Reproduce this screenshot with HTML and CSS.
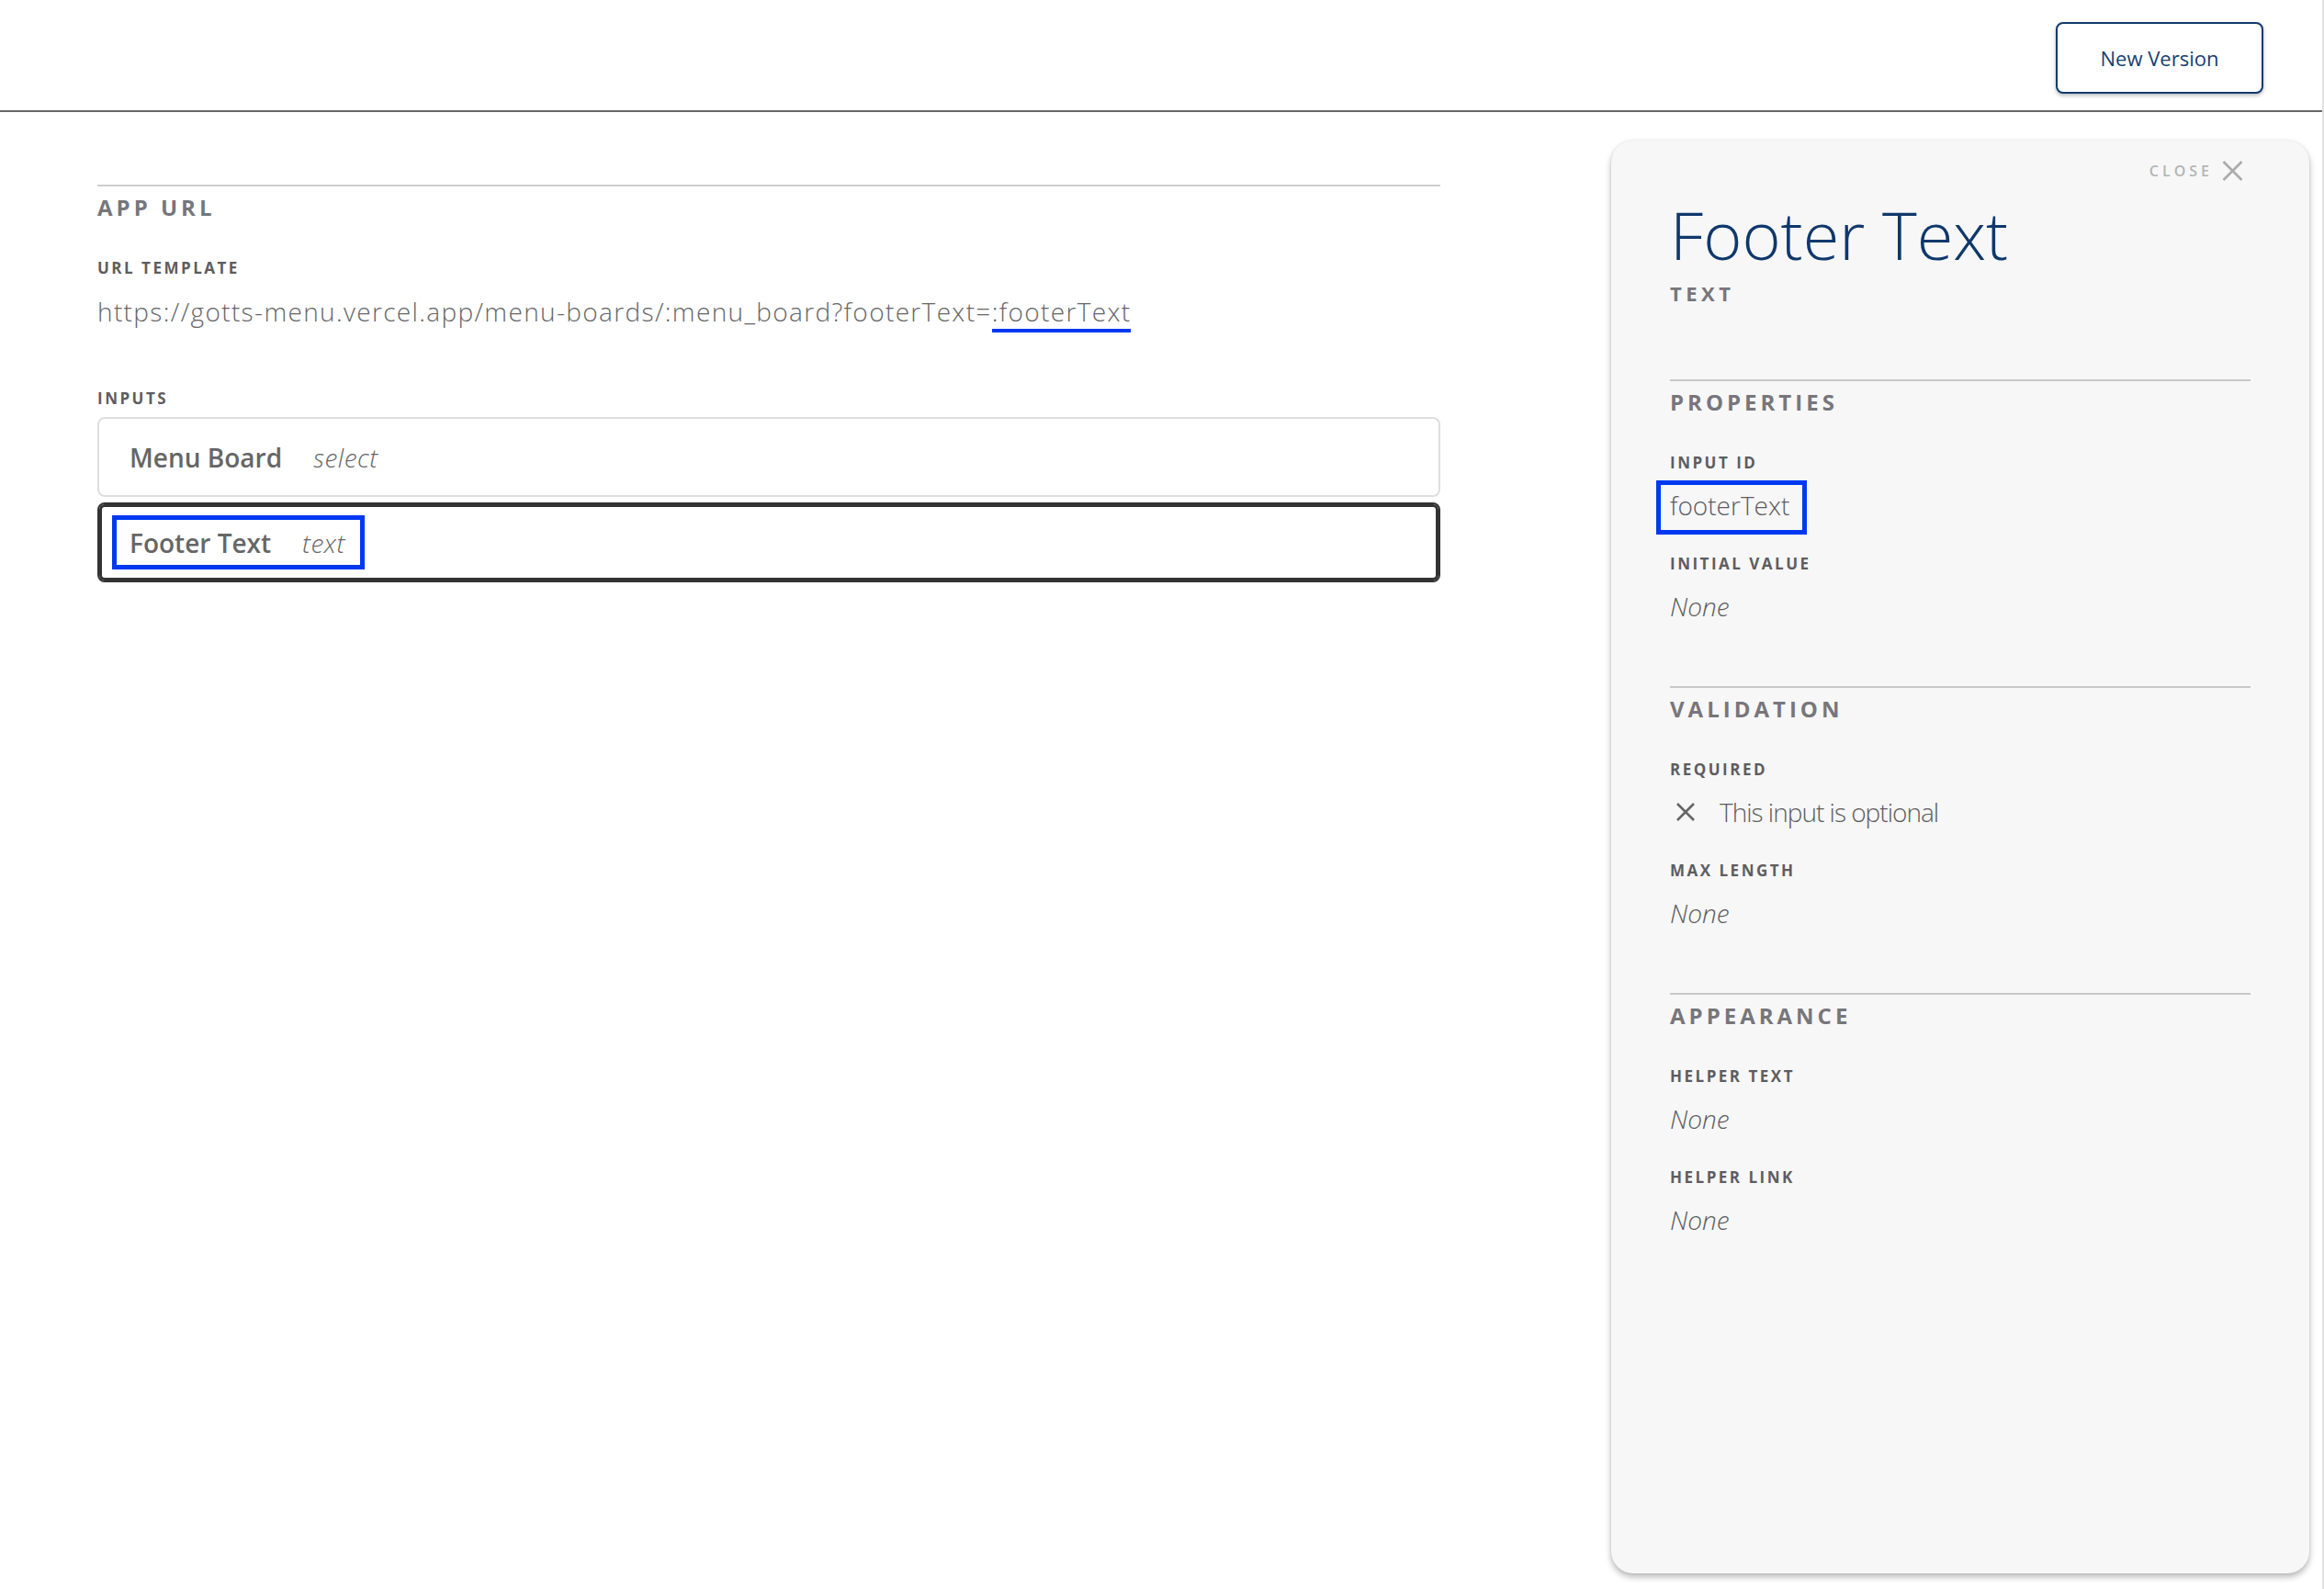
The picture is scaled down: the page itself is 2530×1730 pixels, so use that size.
FILE: index.html
```html
<!DOCTYPE html>
<html lang="en">
<head>
<meta charset="utf-8">
<title>Footer Text</title>
<link rel="stylesheet" href="styles.css">
</head>
<body>
<div class="page">
  <header class="topbar">
    <button class="btn-outline" type="button">New Version</button>
  </header>
  <div class="main">
    <section class="content">
      <div class="block">
        <h2 class="heading">APP URL</h2>
        <div class="label label-first">URL TEMPLATE</div>
        <div class="url">https://gotts-menu.vercel.app/menu-boards/:menu_board?footerText=<span class="url-param">:footerText</span></div>
        <div class="label label-inputs">INPUTS</div>
        <ul class="input-list">
          <li class="input-row">
            <span class="input-name">Menu Board</span><span class="input-type">select</span>
          </li>
          <li class="input-row is-selected">
            <span class="input-tag"><span class="input-name">Footer Text</span><span class="input-type">text</span></span>
          </li>
        </ul>
      </div>
    </section>
    <aside class="panel">
      <div class="panel-close">
        <span class="close-text">CLOSE</span>
        <svg class="close-icon" width="23" height="22" viewBox="0 0 23 22" aria-hidden="true"><path d="M1.5 1 L21.5 21 M21.5 1 L1.5 21" stroke="#ababab" stroke-width="2.6" fill="none"/></svg>
      </div>
      <h1 class="panel-title">Footer Text</h1>
      <div class="panel-type">TEXT</div>

      <section class="panel-section">
        <h3 class="heading">PROPERTIES</h3>
        <div class="label label-first">INPUT ID</div>
        <div class="value"><span class="value-tag">footerText</span></div>
        <div class="label">INITIAL VALUE</div>
        <div class="value empty">None</div>
      </section>

      <section class="panel-section">
        <h3 class="heading">VALIDATION</h3>
        <div class="label label-first">REQUIRED</div>
        <div class="value optional">
          <svg class="x-icon" width="22" height="22" viewBox="0 0 22 22" aria-hidden="true"><path d="M2 2 L20 20 M20 2 L2 20" stroke="#666" stroke-width="2.6" fill="none"/></svg>
          <span class="optional-text">This input is optional</span>
        </div>
        <div class="label">MAX LENGTH</div>
        <div class="value empty">None</div>
      </section>

      <section class="panel-section">
        <h3 class="heading">APPEARANCE</h3>
        <div class="label label-first">HELPER TEXT</div>
        <div class="value empty">None</div>
        <div class="label">HELPER LINK</div>
        <div class="value empty">None</div>
      </section>
    </aside>
  </div>
</div>
</body>
</html>
```

FILE: styles.css
```css
* { box-sizing: border-box; }

html, body {
  margin: 0;
  padding: 0;
  background: #ffffff;
  font-family: "Open Sans", "Liberation Sans", sans-serif;
  color: #666666;
}

.page {
  width: 2530px;
  height: 1730px;
  border-right: 2px solid #e2e2e2;
  overflow: hidden;
}

/* Top bar */
.topbar {
  height: 122px;
  border-bottom: 2px solid #676767;
  display: flex;
  justify-content: flex-end;
  align-items: flex-start;
  padding: 24px 64px 0 0;
}

.btn-outline {
  width: 226px;
  height: 78px;
  background: #ffffff;
  border: 2px solid #123a6d;
  border-radius: 8px;
  box-shadow: 0 2px 4px rgba(0, 0, 0, 0.28);
  font-family: "Open Sans", "Liberation Sans", sans-serif;
  font-size: 22px;
  font-weight: 400;
  color: #173e71;
  padding: 0;
  cursor: pointer;
}

/* Main layout */
.main {
  display: flex;
  align-items: flex-start;
  padding: 0 14px 0 106px;
}

.content {
  width: 1462px;
  margin-top: 79px;
}

.block {
  border-top: 2px solid #cdcdcd;
  padding-top: 8px;
}

.heading {
  margin: 0;
  font-size: 24px;
  line-height: 30px;
  font-weight: 700;
  letter-spacing: 4px;
  color: #77767b;
}

.label {
  margin-top: 34px;
  font-size: 17px;
  line-height: 20px;
  font-weight: 700;
  letter-spacing: 2.5px;
  color: #5d5d61;
}

.label-first { margin-top: 41px; }

.url {
  margin-top: 17px;
  font-size: 28px;
  line-height: 40px;
  font-weight: 300;
  letter-spacing: 1.35px;
  color: #666668;
  white-space: nowrap;
}

.url-param {
  border-bottom: 4px solid #0038f2;
}

.label-inputs { margin-top: 65px; }

.input-list {
  list-style: none;
  margin: 10px 0 0;
  padding: 0;
  display: flex;
  flex-direction: column;
  gap: 6px;
}

.input-row {
  height: 87px;
  border: 2px solid #dedede;
  border-radius: 8px;
  padding-left: 33px;
  display: flex;
  align-items: center;
}

.input-row.is-selected {
  border-color: #333333;
  box-shadow: inset 0 0 0 3px #333333;
}

.input-name {
  font-size: 28px;
  font-weight: 600;
  color: #666666;
}

.input-type {
  margin-left: 34px;
  font-size: 28px;
  font-weight: 300;
  font-style: italic;
  color: #666666;
  letter-spacing: 0.5px;
}

.input-tag {
  display: inline-flex;
  align-items: center;
  height: 59px;
  border: 5px solid #0038f2;
  padding: 0 16px 0 14px;
  margin-left: -19px;
}

/* Side panel */
.panel {
  margin-left: auto;
  margin-top: 31px;
  width: 760px;
  height: 1560px;
  background: #f7f7f7;
  border-radius: 24px;
  box-shadow: 0 4px 7px rgba(0, 0, 0, 0.28), 0 0 3px rgba(0, 0, 0, 0.08);
  padding: 21px 64px 0;
}

.panel-close {
  display: flex;
  justify-content: flex-end;
  align-items: center;
  gap: 10px;
  height: 24px;
  margin-right: 8px;
}

.close-text {
  font-size: 16px;
  font-weight: 600;
  letter-spacing: 4px;
  color: #b4b4b4;
}

.close-icon { display: block; }

.panel-title {
  margin: 17px 0 0;
  font-size: 72px;
  line-height: 80px;
  font-weight: 350;
  color: #0f386c;
}

.panel-type {
  margin-top: 11px;
  font-size: 22px;
  line-height: 26px;
  font-weight: 700;
  letter-spacing: 4.5px;
  color: #77767b;
}

.panel-section {
  border-top: 2px solid #c8c8c8;
  padding-top: 8px;
  margin-top: 67px;
}

.panel-type + .panel-section { margin-top: 81px; }

.value {
  margin-top: 16px;
  font-size: 28px;
  line-height: 40px;
  font-weight: 300;
  color: #5c5c60;
}

.value.empty { font-style: italic; }

.value-tag {
  display: inline-block;
  border: 5px solid #0038f2;
  padding: 2px 14px 7px 10px;
  margin: -7px -19px -12px -15px;
  line-height: 40px;
}

.optional {
  display: flex;
  align-items: center;
  height: 40px;
}

.x-icon {
  display: block;
  margin-left: 6px;
  margin-right: 26px;
}

.optional-text { letter-spacing: -1px; }
```
